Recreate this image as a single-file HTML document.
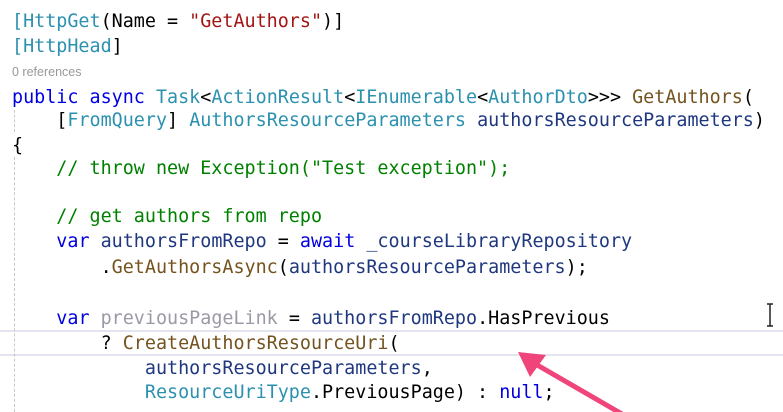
<!DOCTYPE html>
<html><head><meta charset="utf-8"><style>
html,body{margin:0;padding:0;background:#fff;width:783px;height:412px;overflow:hidden;position:relative}
.l{position:absolute;left:12px;height:25px;line-height:25px;white-space:pre;font-family:"DejaVu Sans Mono","Liberation Mono",monospace;font-size:18.4px;color:#000;letter-spacing:0}
.t{color:#2b91af}.k{color:#0000e0}.s{color:#a31515}.c{color:#008000}.m{color:#74531f}.v{color:#1f377f}.g{color:#9a9aa6}
.ref{position:absolute;left:12px;top:65px;font-family:"Liberation Sans",sans-serif;font-size:12.5px;color:#999}
.guide{position:absolute;left:14px;width:0;border-left:1px dashed #c8c8c8}
.hl{position:absolute;left:0;top:330px;width:783px;height:22px;border-top:2px solid #e4e4f0;border-bottom:2px solid #e4e4f0}
</style></head><body>
<div class="hl"></div>
<div class="guide" style="top:110px;height:22px"></div>
<div class="guide" style="top:157px;height:255px"></div>
<div class="l" style="top:9px"><span class="t">[HttpGet</span>(Name = <span class="s">"GetAuthors"</span>)]</div>
<div class="l" style="top:34px"><span class="t">[HttpHead</span>]</div>
<div class="ref">0 references</div>
<div class="l" style="top:85px"><span class="k">public async</span> <span class="t">Task</span>&lt;<span class="t">ActionResult</span>&lt;<span class="t">IEnumerable</span>&lt;<span class="t">AuthorDto</span>&gt;&gt;&gt; <span class="m">GetAuthors</span>(</div>
<div class="l" style="top:108px">    [<span class="t">FromQuery</span>] <span class="t">AuthorsResourceParameters</span> <span class="v">authorsResourceParameters</span>)</div>
<div class="l" style="top:133px">{</div>
<div class="l" style="top:156px">    <span class="c">// throw new Exception("Test exception");</span></div>
<div class="l" style="top:204px">    <span class="c">// get authors from repo</span></div>
<div class="l" style="top:229px">    <span class="k">var</span> <span class="v">authorsFromRepo</span> = <span class="k">await</span> <span class="v">_courseLibraryRepository</span></div>
<div class="l" style="top:255px">        .<span class="m">GetAuthorsAsync</span>(<span class="v">authorsResourceParameters</span>);</div>
<div class="l" style="top:306px">    <span class="k">var</span> <span class="g">previousPageLink</span> = <span class="v">authorsFromRepo</span>.HasPrevious</div>
<div class="l" style="top:331px">        ? <span class="m">CreateAuthorsResourceUri</span>(</div>
<div class="l" style="top:356px">            <span class="v">authorsResourceParameters</span>,</div>
<div class="l" style="top:380px">            <span class="t">ResourceUriType</span>.PreviousPage) : <span class="k">null</span>;</div>
<svg style="position:absolute;left:0;top:0" width="783" height="412">
<path d="M767 304h6M770 304v22M767 326h6" stroke="#222" stroke-width="1.5" fill="none"/>
<line x1="622" y1="414" x2="532" y2="362" stroke="#f0457a" stroke-width="5"/>
<polygon points="518,352 546,355 530,377" fill="#f0457a"/>
</svg>
</body></html>
